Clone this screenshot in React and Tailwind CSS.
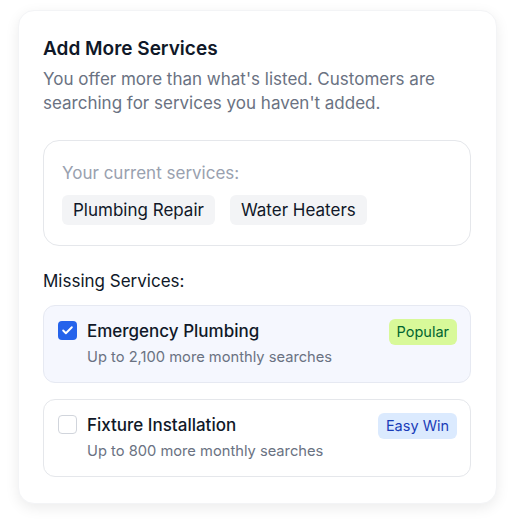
import { Check } from "lucide-react";

const current = ["Plumbing Repair", "Water Heaters"];

const missing = [
  {
    name: "Emergency Plumbing",
    searches: "Up to 2,100 more monthly searches",
    tag: "Popular",
    tagClass: "bg-lime-200 text-green-800",
    checked: true,
  },
  {
    name: "Fixture Installation",
    searches: "Up to 800 more monthly searches",
    tag: "Easy Win",
    tagClass: "bg-blue-100 text-blue-800",
    checked: false,
  },
];

function ServiceRow({ item }) {
  return (
    <div
      className={
        "flex items-start justify-between rounded-xl border pt-[13px] pb-[15px] pl-[14px] pr-[13px] " +
        (item.checked ? "border-[#e6e9f2] bg-[#f5f7fe]" : "border-gray-200 bg-white")
      }
    >
      <div className="flex items-start gap-[10px]">
        <div
          className={
            "mt-[2px] flex h-[19px] w-[19px] items-center justify-center rounded-[4px] " +
            (item.checked ? "bg-[#2563eb]" : "border border-gray-300 bg-white")
          }
        >
          {item.checked && <Check className="h-[13px] w-[13px] text-white" strokeWidth={3.5} />}
        </div>
        <div>
          <p className="text-[17px] leading-6 font-medium text-gray-900">{item.name}</p>
          <p className="mt-1 text-[14.7px] leading-5 text-gray-500">{item.searches}</p>
        </div>
      </div>
      <span className={"rounded-md px-2 py-[3px] text-[14.5px] leading-5 " + item.tagClass}>{item.tag}</span>
    </div>
  );
}

export default function App() {
  return (
    <div className="min-h-screen bg-white pt-[10px] pl-[18px]" style={{ fontFamily: "Inter, 'Noto Sans', sans-serif" }}>
      <div className="w-[479px] rounded-2xl border border-gray-100 bg-white pl-6 pr-[25px] pt-6 pb-[26px] shadow-[0_4px_14px_rgba(0,0,0,0.08)]">
        <h2 className="text-[19px] leading-7 font-semibold text-gray-900">Add More Services</h2>
        <p className="mt-1 text-[17px] leading-6 text-gray-500">
          You offer more than what's listed. Customers are searching for services you haven't added.
        </p>

        <div className="mt-[25px] rounded-2xl border border-gray-200 px-[18px] py-5">
          <p className="text-[17px] leading-6 text-gray-400">Your current services:</p>
          <div className="mt-[10px] flex gap-[15px]">
            {current.map((s) => (
              <span key={s} className="rounded-md bg-gray-100 px-[11px] py-[3px] text-[17px] leading-6 text-gray-900">
                {s}
              </span>
            ))}
          </div>
        </div>

        <p className="mt-[23px] text-[17px] leading-6 text-gray-900">Missing Services:</p>
        <div className="mt-3 flex flex-col gap-4">
          {missing.map((m) => (
            <ServiceRow key={m.name} item={m} />
          ))}
        </div>
      </div>
    </div>
  );
}
